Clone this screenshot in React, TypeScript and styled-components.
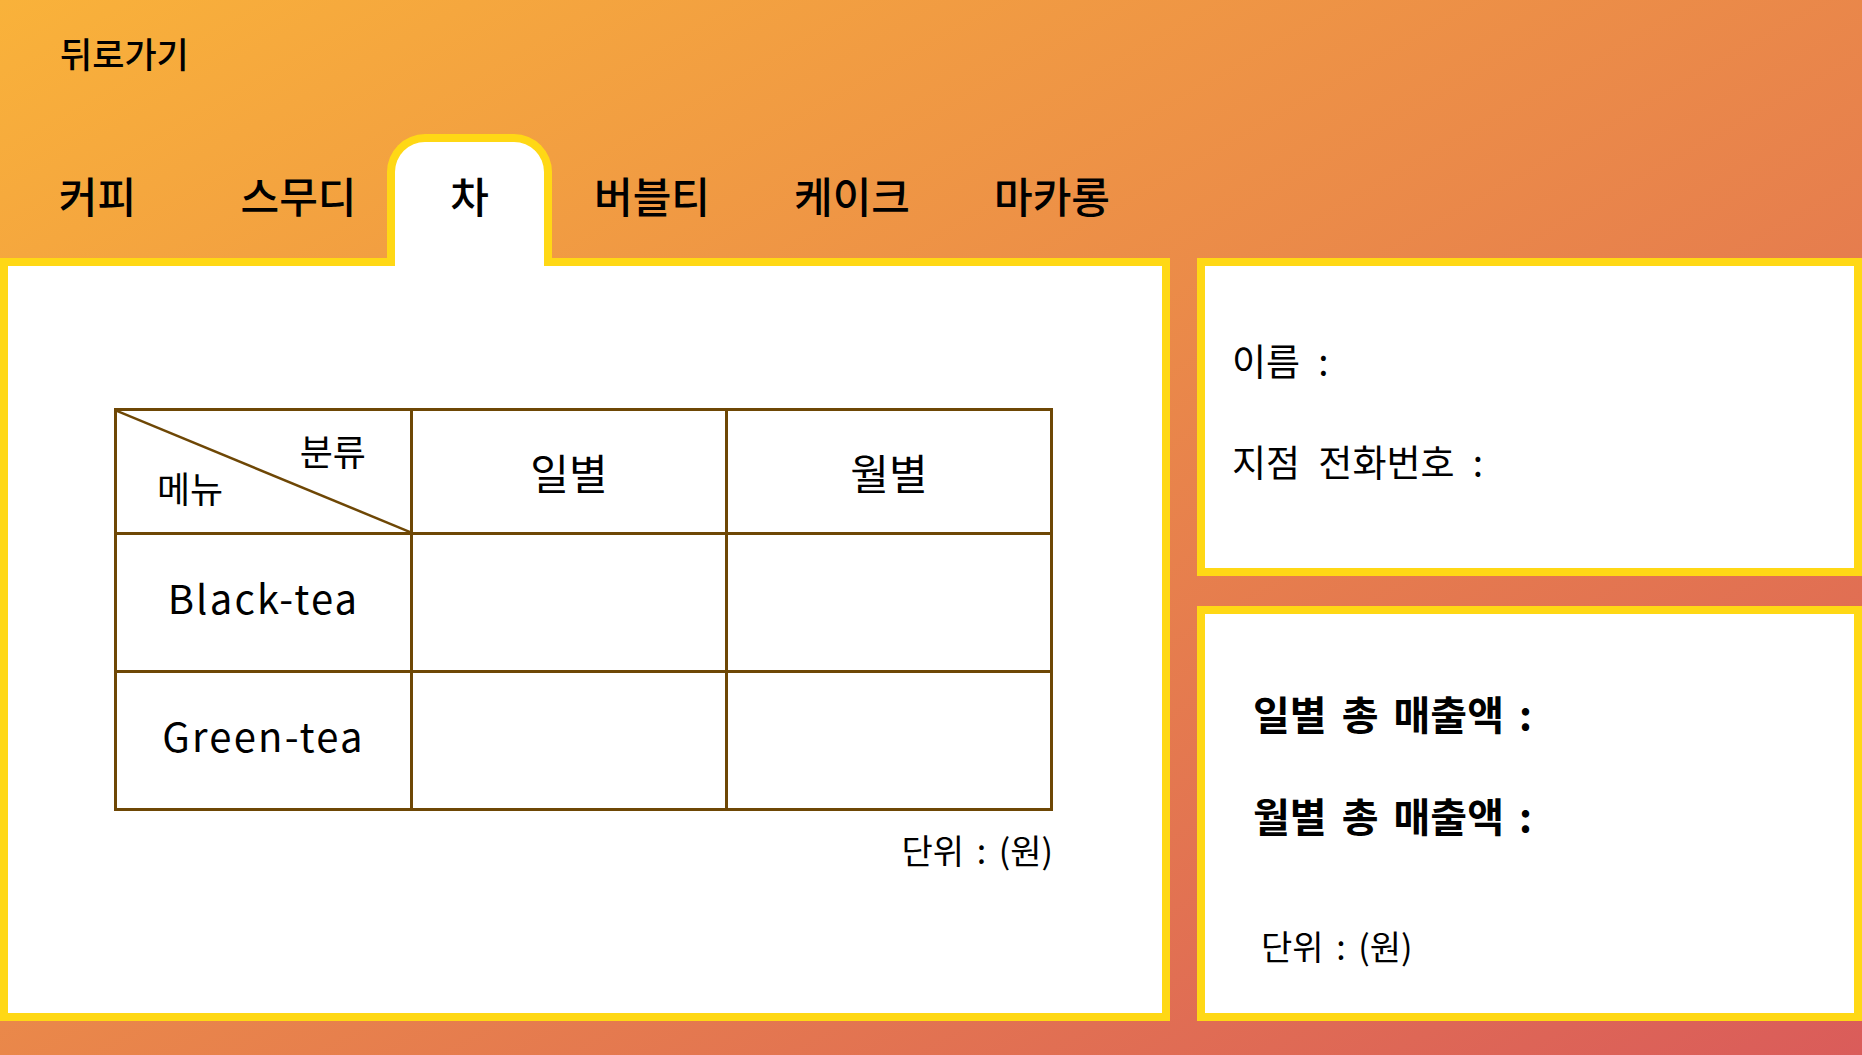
import React from "react";
import styled, { createGlobalStyle } from "styled-components";

const YELLOW = "#FFD815";
const BROWN = "#6E4705";

const GlobalStyle = createGlobalStyle`
  html, body { margin: 0; padding: 0; }
  body {
    font-family: "Noto Sans CJK KR", "Noto Sans", sans-serif;
    color: #000;
  }
  *, *::before, *::after { box-sizing: border-box; }
`;

const Page = styled.div`
  width: 1862px;
  height: 1055px;
  overflow: hidden;
  background: linear-gradient(to bottom right, #f9b23a, #da5c5a);
  display: flex;
  flex-direction: column;
`;

const TopBar = styled.header`
  height: 134px;
  padding: 35px 0 0 60px;
`;

const BackLink = styled.a`
  font-size: 35px;
  line-height: 1;
  font-weight: 500;
  color: #000;
  text-decoration: none;
  cursor: pointer;
`;

const TabBar = styled.nav`
  height: 124px;
  display: flex;
  align-items: flex-end;
  position: relative;
  z-index: 1;
`;

const Tab = styled.div<{ $w: number; $ml?: number; $active?: boolean }>`
  width: ${(p) => p.$w}px;
  margin-left: ${(p) => p.$ml ?? 0}px;
  margin-bottom: -8px;
  height: 132px;
  padding-top: 32px;
  border: 8px solid ${(p) => (p.$active ? YELLOW : "transparent")};
  border-bottom: none;
  border-radius: 38px 38px 0 0;
  background: ${(p) => (p.$active ? "#fff" : "transparent")};
  font-size: 42px;
  line-height: 1;
  font-weight: 500;
  text-align: center;
  cursor: pointer;
`;

const ContentRow = styled.main`
  height: 763px;
  display: flex;
  gap: 27px;
`;

const Panel = styled.section`
  background: #fff;
  border: 8px solid ${YELLOW};
`;

const MainPanel = styled(Panel)`
  width: 1170px;
  padding: 142px 0 0 109px;
`;

const SideColumn = styled.div`
  flex: 1;
  display: flex;
  flex-direction: column;
  gap: 30px;
`;

const InfoPanel = styled(Panel)`
  height: 318px;
  padding: 76px 0 0 27px;
  display: flex;
  flex-direction: column;
  gap: 64px;
`;

const InfoLine = styled.div`
  font-size: 37px;
  line-height: 1;
  word-spacing: 10px;
`;

const SalesPanel = styled(Panel)`
  flex: 1;
  padding: 79px 0 0 48px;
  display: flex;
  flex-direction: column;
`;

const SalesLine = styled.div<{ $gap?: number }>`
  font-size: 40px;
  line-height: 1;
  font-weight: 700;
  word-spacing: 6px;
  margin-top: ${(p) => p.$gap ?? 0}px;
`;

const UnitNote = styled.div<{ $mt: number; $ml?: number }>`
  font-size: 34px;
  line-height: 1;
  word-spacing: 5px;
  margin-top: ${(p) => p.$mt}px;
  margin-left: ${(p) => p.$ml ?? 0}px;
`;

const TableWrap = styled.div`
  width: 936px;
  display: flex;
  flex-direction: column;
  align-items: flex-end;
`;

const SalesTable = styled.table`
  width: 936px;
  border-collapse: collapse;
  table-layout: fixed;
  border: 3px solid ${BROWN};
`;

const Cell = styled.td<{ $h: number }>`
  height: ${(p) => p.$h}px;
  border: 3px solid ${BROWN};
  padding: 0;
  text-align: center;
  vertical-align: middle;
  font-size: 42px;
  line-height: 1;
`;

const MenuName = styled.span`
  display: block;
  padding-bottom: 11px;
  font-size: 40px;
  letter-spacing: 2.2px;
`;

const Corner = styled.div`
  position: relative;
  height: 121px;
  display: flex;
  flex-direction: column;
  justify-content: space-between;
  padding: 21px 44px 27px 40px;
  font-size: 36px;
  line-height: 1;
`;

const Diagonal = styled.svg`
  position: absolute;
  inset: 0;
  width: 100%;
  height: 100%;
  pointer-events: none;
`;

const CornerLabel = styled.span<{ $align: "left" | "right" }>`
  align-self: ${(p) => (p.$align === "left" ? "flex-start" : "flex-end")};
  position: relative;
`;

const tabs = [
  { label: "커피", w: 195, ml: 0 },
  { label: "스무디", w: 177, ml: 15 },
  { label: "차", w: 165, ml: 0, active: true },
  { label: "버블티", w: 200, ml: 0 },
  { label: "케이크", w: 200, ml: 0 },
  { label: "마카롱", w: 200, ml: 0 },
];

const rows = ["Black-tea", "Green-tea"];

export default function App() {
  return (
    <>
      <GlobalStyle />
      <Page>
        <TopBar>
          <BackLink>뒤로가기</BackLink>
        </TopBar>
        <TabBar>
          {tabs.map((t) => (
            <Tab key={t.label} $w={t.w} $ml={t.ml} $active={t.active}>
              {t.label}
            </Tab>
          ))}
        </TabBar>
        <ContentRow>
          <MainPanel>
            <TableWrap>
              <SalesTable>
                <colgroup>
                  <col style={{ width: 296 }} />
                  <col style={{ width: 315 }} />
                  <col style={{ width: 325 }} />
                </colgroup>
                <tbody>
                  <tr>
                    <Cell $h={124}>
                      <Corner>
                        <Diagonal viewBox="0 0 100 100" preserveAspectRatio="none">
                          <line
                            x1="0"
                            y1="0"
                            x2="100"
                            y2="100"
                            stroke={BROWN}
                            strokeWidth="2.5"
                            vectorEffect="non-scaling-stroke"
                          />
                        </Diagonal>
                        <CornerLabel $align="right">분류</CornerLabel>
                        <CornerLabel $align="left">메뉴</CornerLabel>
                      </Corner>
                    </Cell>
                    <Cell $h={124}>일별</Cell>
                    <Cell $h={124}>월별</Cell>
                  </tr>
                  {rows.map((r) => (
                    <tr key={r}>
                      <Cell $h={138}>
                        <MenuName>{r}</MenuName>
                      </Cell>
                      <Cell $h={138} />
                      <Cell $h={138} />
                    </tr>
                  ))}
                </tbody>
              </SalesTable>
              <UnitNote $mt={22}>단위 : (원)</UnitNote>
            </TableWrap>
          </MainPanel>
          <SideColumn>
            <InfoPanel>
              <InfoLine>이름 :</InfoLine>
              <InfoLine>지점 전화번호 :</InfoLine>
            </InfoPanel>
            <SalesPanel>
              <SalesLine>일별 총 매출액 :</SalesLine>
              <SalesLine $gap={62}>월별 총 매출액 :</SalesLine>
              <UnitNote $mt={94} $ml={8}>단위 : (원)</UnitNote>
            </SalesPanel>
          </SideColumn>
        </ContentRow>
      </Page>
    </>
  );
}
